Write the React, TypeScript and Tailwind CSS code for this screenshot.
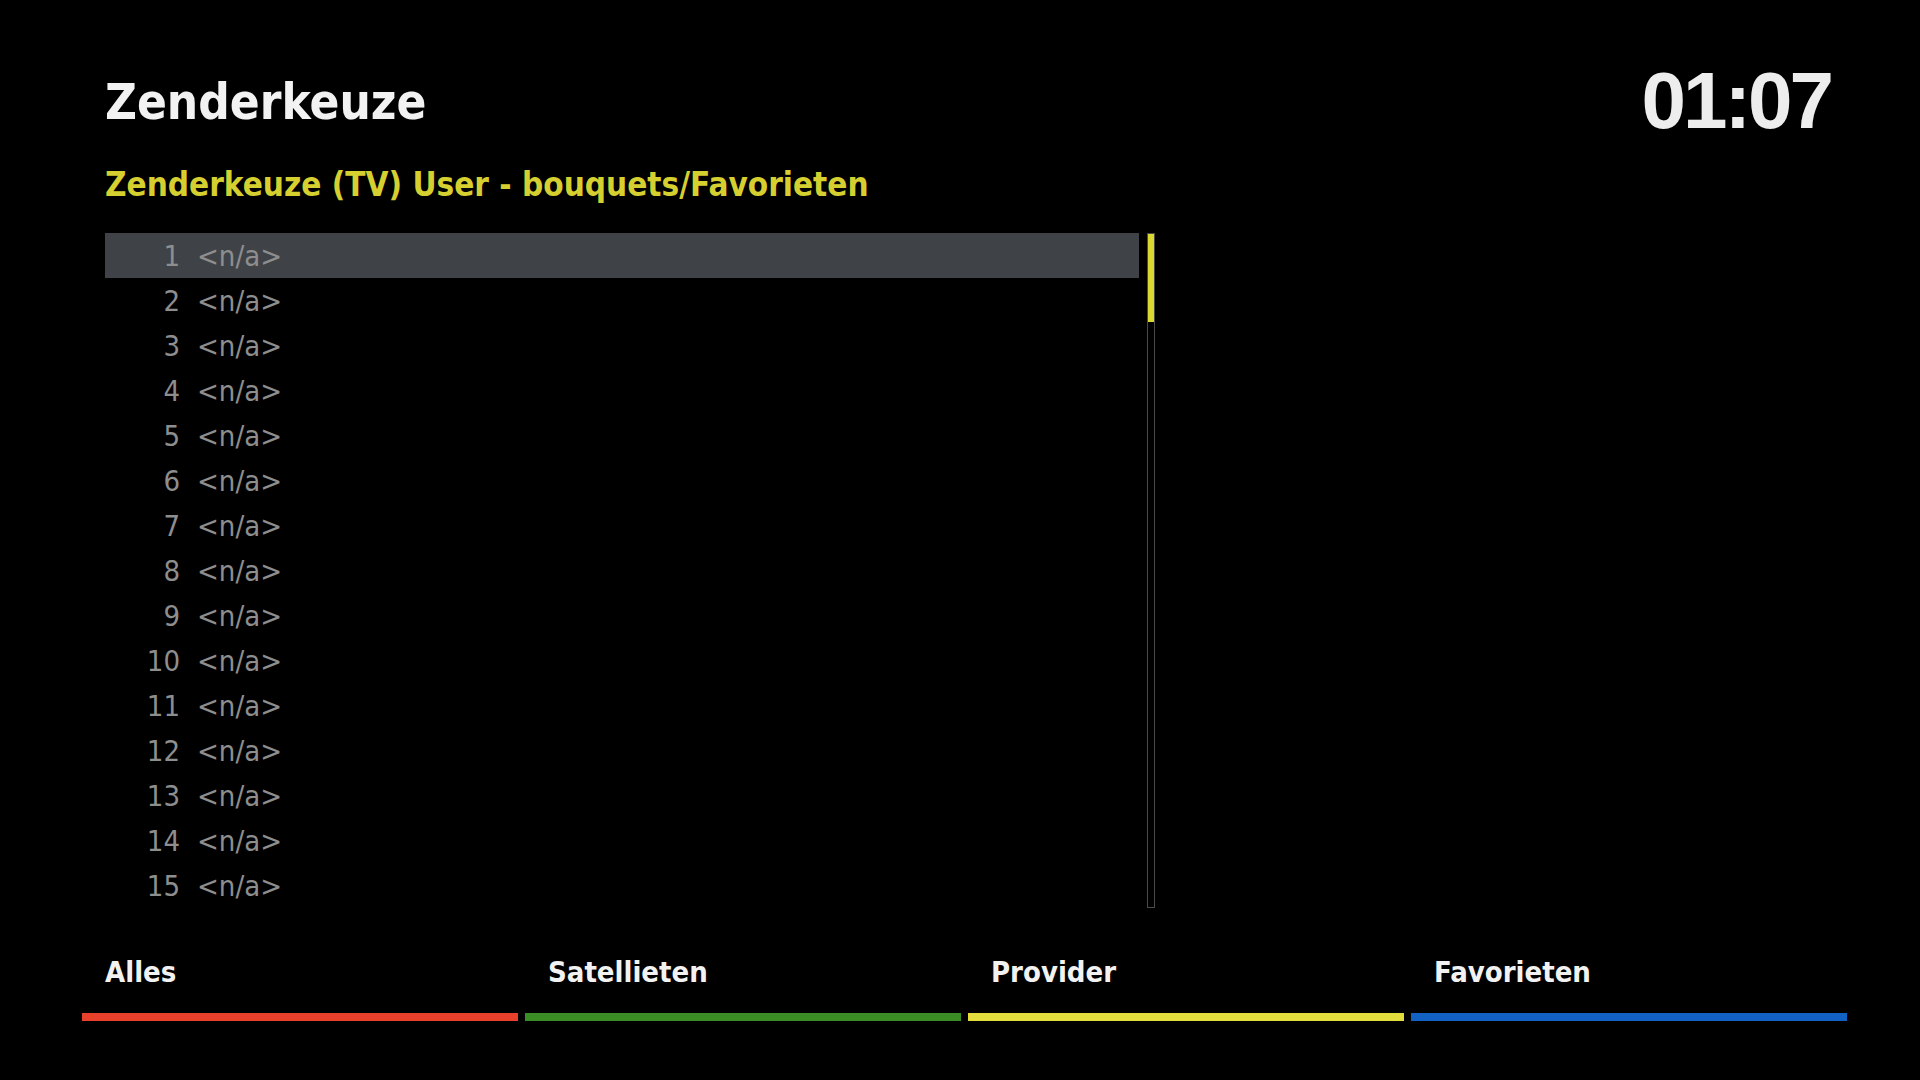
const channels = Array.from({ length: 15 }, (_, i) => i + 1);

const buttons = [
  { label: "Alles", bar: "bg-[#e8402a]" },
  { label: "Satellieten", bar: "bg-[#3a8c24]" },
  { label: "Provider", bar: "bg-[#e2dc3c]" },
  { label: "Favorieten", bar: "bg-[#1262c4]" },
];

const cond = "font-['DejaVu_Sans_Condensed','DejaVu_Sans',sans-serif] font-stretch-condensed";

export default function App() {
  return (
    <div className="w-[1920px] h-[1080px] bg-black overflow-hidden flex flex-col">
      {/* kop */}
      <div className="flex items-start justify-between pt-[61px] pl-[105px] pr-[89px]">
        <h1 className={`${cond} mt-[12px] text-[49px] leading-[60px] text-[#f2f2f2] font-semibold`}>
          Zenderkeuze
        </h1>
        <div className="font-['Liberation_Sans',Arial,sans-serif] font-bold text-[80px] leading-[80px] tracking-[-3px] text-[#ededed]">
          01:07
        </div>
      </div>

      <div className={`${cond} mt-[24px] pl-[105px] text-[33px] leading-[40px] text-[#d6cf30] font-semibold`}>
        Zenderkeuze (TV) User - bouquets/Favorieten
      </div>

      {/* zenderlijst */}
      <div className="mt-[28px] pl-[105px] flex gap-[8px]">
        <div className="w-[1034px] flex flex-col">
          {channels.map((n) => (
            <div
              key={n}
              className={`h-[45px] flex items-center pt-[2px] ${cond} text-[29px] text-[#8e8e8e] ${n === 1 ? "bg-[#3f4347]" : ""}`}
            >
              <span className="w-[75px] text-right">{n}</span>
              <span className="ml-[17px]">&lt;n/a&gt;</span>
            </div>
          ))}
        </div>
        <div className="w-[8px] h-[675px] border border-[#4a4a4a] flex flex-col">
          <div className="h-[88px] bg-[#dcd832]" />
        </div>
      </div>

      {/* kleurtoetsen */}
      <div className="mt-[47px] pl-[82px] flex gap-[7px]">
        {buttons.map((b) => (
          <div key={b.label} className="w-[436px] flex flex-col">
            <div className={`${cond} pl-[23px] text-[29px] leading-[35px] text-[#f2f2f2] font-semibold`}>
              {b.label}
            </div>
            <div className={`mt-[23px] h-[8px] ${b.bar}`} />
          </div>
        ))}
      </div>
    </div>
  );
}
